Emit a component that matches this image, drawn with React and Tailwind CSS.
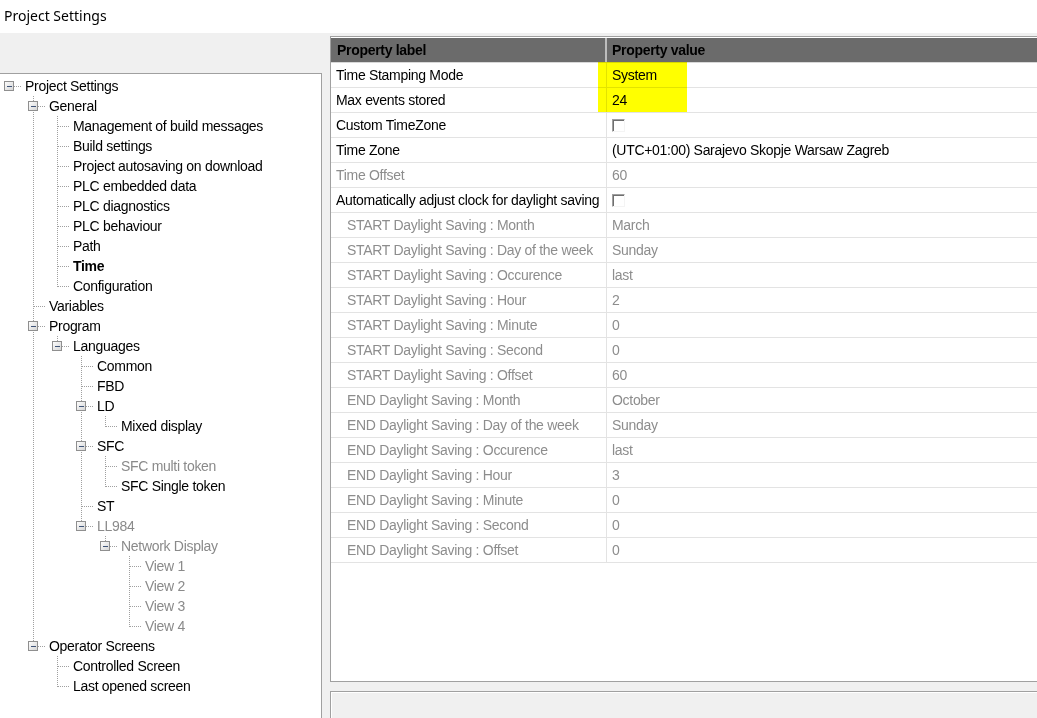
import React from 'react';

const tree = [
  {
    label: 'Project Settings',
    children: [
      {
        label: 'General',
        children: [
          { label: 'Management of build messages' },
          { label: 'Build settings' },
          { label: 'Project autosaving on download' },
          { label: 'PLC embedded data' },
          { label: 'PLC diagnostics' },
          { label: 'PLC behaviour' },
          { label: 'Path' },
          { label: 'Time', bold: true },
          { label: 'Configuration' }
        ]
      },
      { label: 'Variables' },
      {
        label: 'Program',
        children: [
          {
            label: 'Languages',
            children: [
              { label: 'Common' },
              { label: 'FBD' },
              { label: 'LD', children: [{ label: 'Mixed display' }] },
              {
                label: 'SFC',
                children: [
                  { label: 'SFC multi token', dim: true },
                  { label: 'SFC Single token' }
                ]
              },
              { label: 'ST' },
              {
                label: 'LL984',
                dim: true,
                children: [
                  {
                    label: 'Network Display',
                    dim: true,
                    children: [
                      { label: 'View 1', dim: true },
                      { label: 'View 2', dim: true },
                      { label: 'View 3', dim: true },
                      { label: 'View 4', dim: true }
                    ]
                  }
                ]
              }
            ]
          }
        ]
      },
      {
        label: 'Operator Screens',
        children: [{ label: 'Controlled Screen' }, { label: 'Last opened screen' }]
      }
    ]
  }
];

const properties = [
  { label: 'Time Stamping Mode', value: 'System' },
  { label: 'Max events stored', value: '24' },
  { label: 'Custom TimeZone', check: true },
  { label: 'Time Zone', value: '(UTC+01:00) Sarajevo Skopje Warsaw Zagreb' },
  { label: 'Time Offset', value: '60', dim: true },
  { label: 'Automatically adjust clock for daylight saving', check: true },
  { label: 'START Daylight Saving : Month', value: 'March', sub: true },
  { label: 'START Daylight Saving : Day of the week', value: 'Sunday', sub: true },
  { label: 'START Daylight Saving : Occurence', value: 'last', sub: true },
  { label: 'START Daylight Saving : Hour', value: '2', sub: true },
  { label: 'START Daylight Saving : Minute', value: '0', sub: true },
  { label: 'START Daylight Saving : Second', value: '0', sub: true },
  { label: 'START Daylight Saving : Offset', value: '60', sub: true },
  { label: 'END Daylight Saving : Month', value: 'October', sub: true },
  { label: 'END Daylight Saving : Day of the week', value: 'Sunday', sub: true },
  { label: 'END Daylight Saving : Occurence', value: 'last', sub: true },
  { label: 'END Daylight Saving : Hour', value: '3', sub: true },
  { label: 'END Daylight Saving : Minute', value: '0', sub: true },
  { label: 'END Daylight Saving : Second', value: '0', sub: true },
  { label: 'END Daylight Saving : Offset', value: '0', sub: true }
];

function flatten(nodes, depth, guides, out) {
  nodes.forEach((node, i) => {
    const last = i === nodes.length - 1;
    out.push({ ...node, depth, guides, last });
    if (node.children) flatten(node.children, depth + 1, [...guides, !last], out);
  });
  return out;
}

const DOT = '#a0a0a0';

// one 24x20 cell of the tree lines
function Cell({ vertical, half, branch, box }) {
  return (
    <svg width="24" height="20" className="shrink-0" shapeRendering="crispEdges">
      {vertical && (
        <line x1="12.5" y1="0" x2="12.5" y2={half ? 11 : 20} stroke={DOT} strokeDasharray="1 1" />
      )}
      {branch && (
        <line x1="13" y1="10.5" x2="25" y2="10.5" stroke={DOT} strokeDasharray="1 1" />
      )}
      {box && (
        <>
          <defs>
            <linearGradient id="boxfill" x1="0" y1="0" x2="1" y2="1">
              <stop offset="0" stopColor="#ffffff" />
              <stop offset="1" stopColor="#d4d4d4" />
            </linearGradient>
          </defs>
          <rect x="7.5" y="5.5" width="9" height="9" fill="url(#boxfill)" stroke="#8f8f8f" />
          <line x1="10" y1="10.5" x2="15" y2="10.5" stroke="#3f5478" />
        </>
      )}
    </svg>
  );
}

function TreeRow({ row }) {
  const cells = [];
  for (let k = 0; k < row.depth; k++) {
    cells.push(<Cell key={k} vertical={row.guides[k]} />);
  }
  cells.push(
    <Cell
      key="own"
      vertical={row.depth > 0}
      half={row.last}
      branch
      box={!!row.children}
    />
  );
  return (
    <div className="flex items-center h-[20px] ml-[-3px] whitespace-nowrap">
      {cells}
      <span
        className={`ml-[4px] leading-[20px] ${row.bold ? 'font-bold' : ''} ${
          row.dim ? 'text-[#8a8a8a]' : 'text-black'
        }`}
      >
        {row.label}
      </span>
    </div>
  );
}

function Checkbox() {
  return (
    <span className="block w-[13px] h-[13px] bg-white border-t border-l border-[#a0a0a0] border-r border-b border-r-[#f4f4f4] border-b-[#f4f4f4] shadow-[inset_1px_1px_0_#6f6f6f]" />
  );
}

function PropertyRow({ p }) {
  const color = p.sub || p.dim ? 'text-[#8d8d8d]' : 'text-black';
  return (
    <div className="flex h-[25px] border-b border-[#e3e3e3]">
      <div
        className={`w-[276px] shrink-0 border-r border-[#e3e3e3] flex items-center pt-[1px] whitespace-nowrap ${
          p.sub ? 'pl-[16px]' : 'pl-[5px]'
        } ${color}`}
      >
        {p.label}
      </div>
      <div className={`flex-1 flex items-center pl-[5px] pt-[1px] whitespace-nowrap ${color}`}>
        {p.check ? <Checkbox /> : p.value}
      </div>
    </div>
  );
}

export default function App() {
  const rows = flatten(tree, 0, [], []);

  return (
    <div className="w-[1037px] h-[718px] overflow-hidden bg-[#f0f0f0] flex flex-col font-['Liberation_Sans',Arial,sans-serif] text-[14px] tracking-[-0.3px]">
      <div className="h-[33px] shrink-0 bg-white pl-[4px] pt-[5px] font-['Noto_Sans',sans-serif] text-[14px] tracking-normal text-black">
        Project Settings
      </div>

      <div className="flex flex-1 min-h-0">
        {/* Tree */}
        <div className="w-[322px] shrink-0 mt-[40px] bg-white border-t border-r border-[#a0a0a0] pt-[2px] overflow-hidden">
          {rows.map((row, i) => (
            <TreeRow key={i} row={row} />
          ))}
        </div>

        {/* Property grid */}
        <div className="flex-1 min-w-0 ml-[8px] mt-[3px] flex flex-col">
          <div className="relative h-[646px] shrink-0 bg-white border-l border-t border-b border-[#a0a0a0] pt-[1px] overflow-hidden">
            <div className="flex h-[25px] bg-[#6b6b6b] font-bold text-black border-b border-[#d8d8d8]">
              <div className="w-[276px] shrink-0 pl-[6px] flex items-center border-r-2 border-[#bdbdbd]">
                Property label
              </div>
              <div className="flex-1 pl-[5px] flex items-center">Property value</div>
            </div>
            {properties.map((p, i) => (
              <PropertyRow key={i} p={p} />
            ))}
            <div className="absolute left-[267px] top-[25px] w-[89px] h-[50px] bg-[#ffff00] mix-blend-multiply" />
          </div>
          <div className="mt-[9px] flex-1 bg-[#f0f0f0] border-l border-t border-[#a0a0a0] shadow-[inset_1px_1px_0_#ffffff]" />
        </div>
      </div>
    </div>
  );
}
